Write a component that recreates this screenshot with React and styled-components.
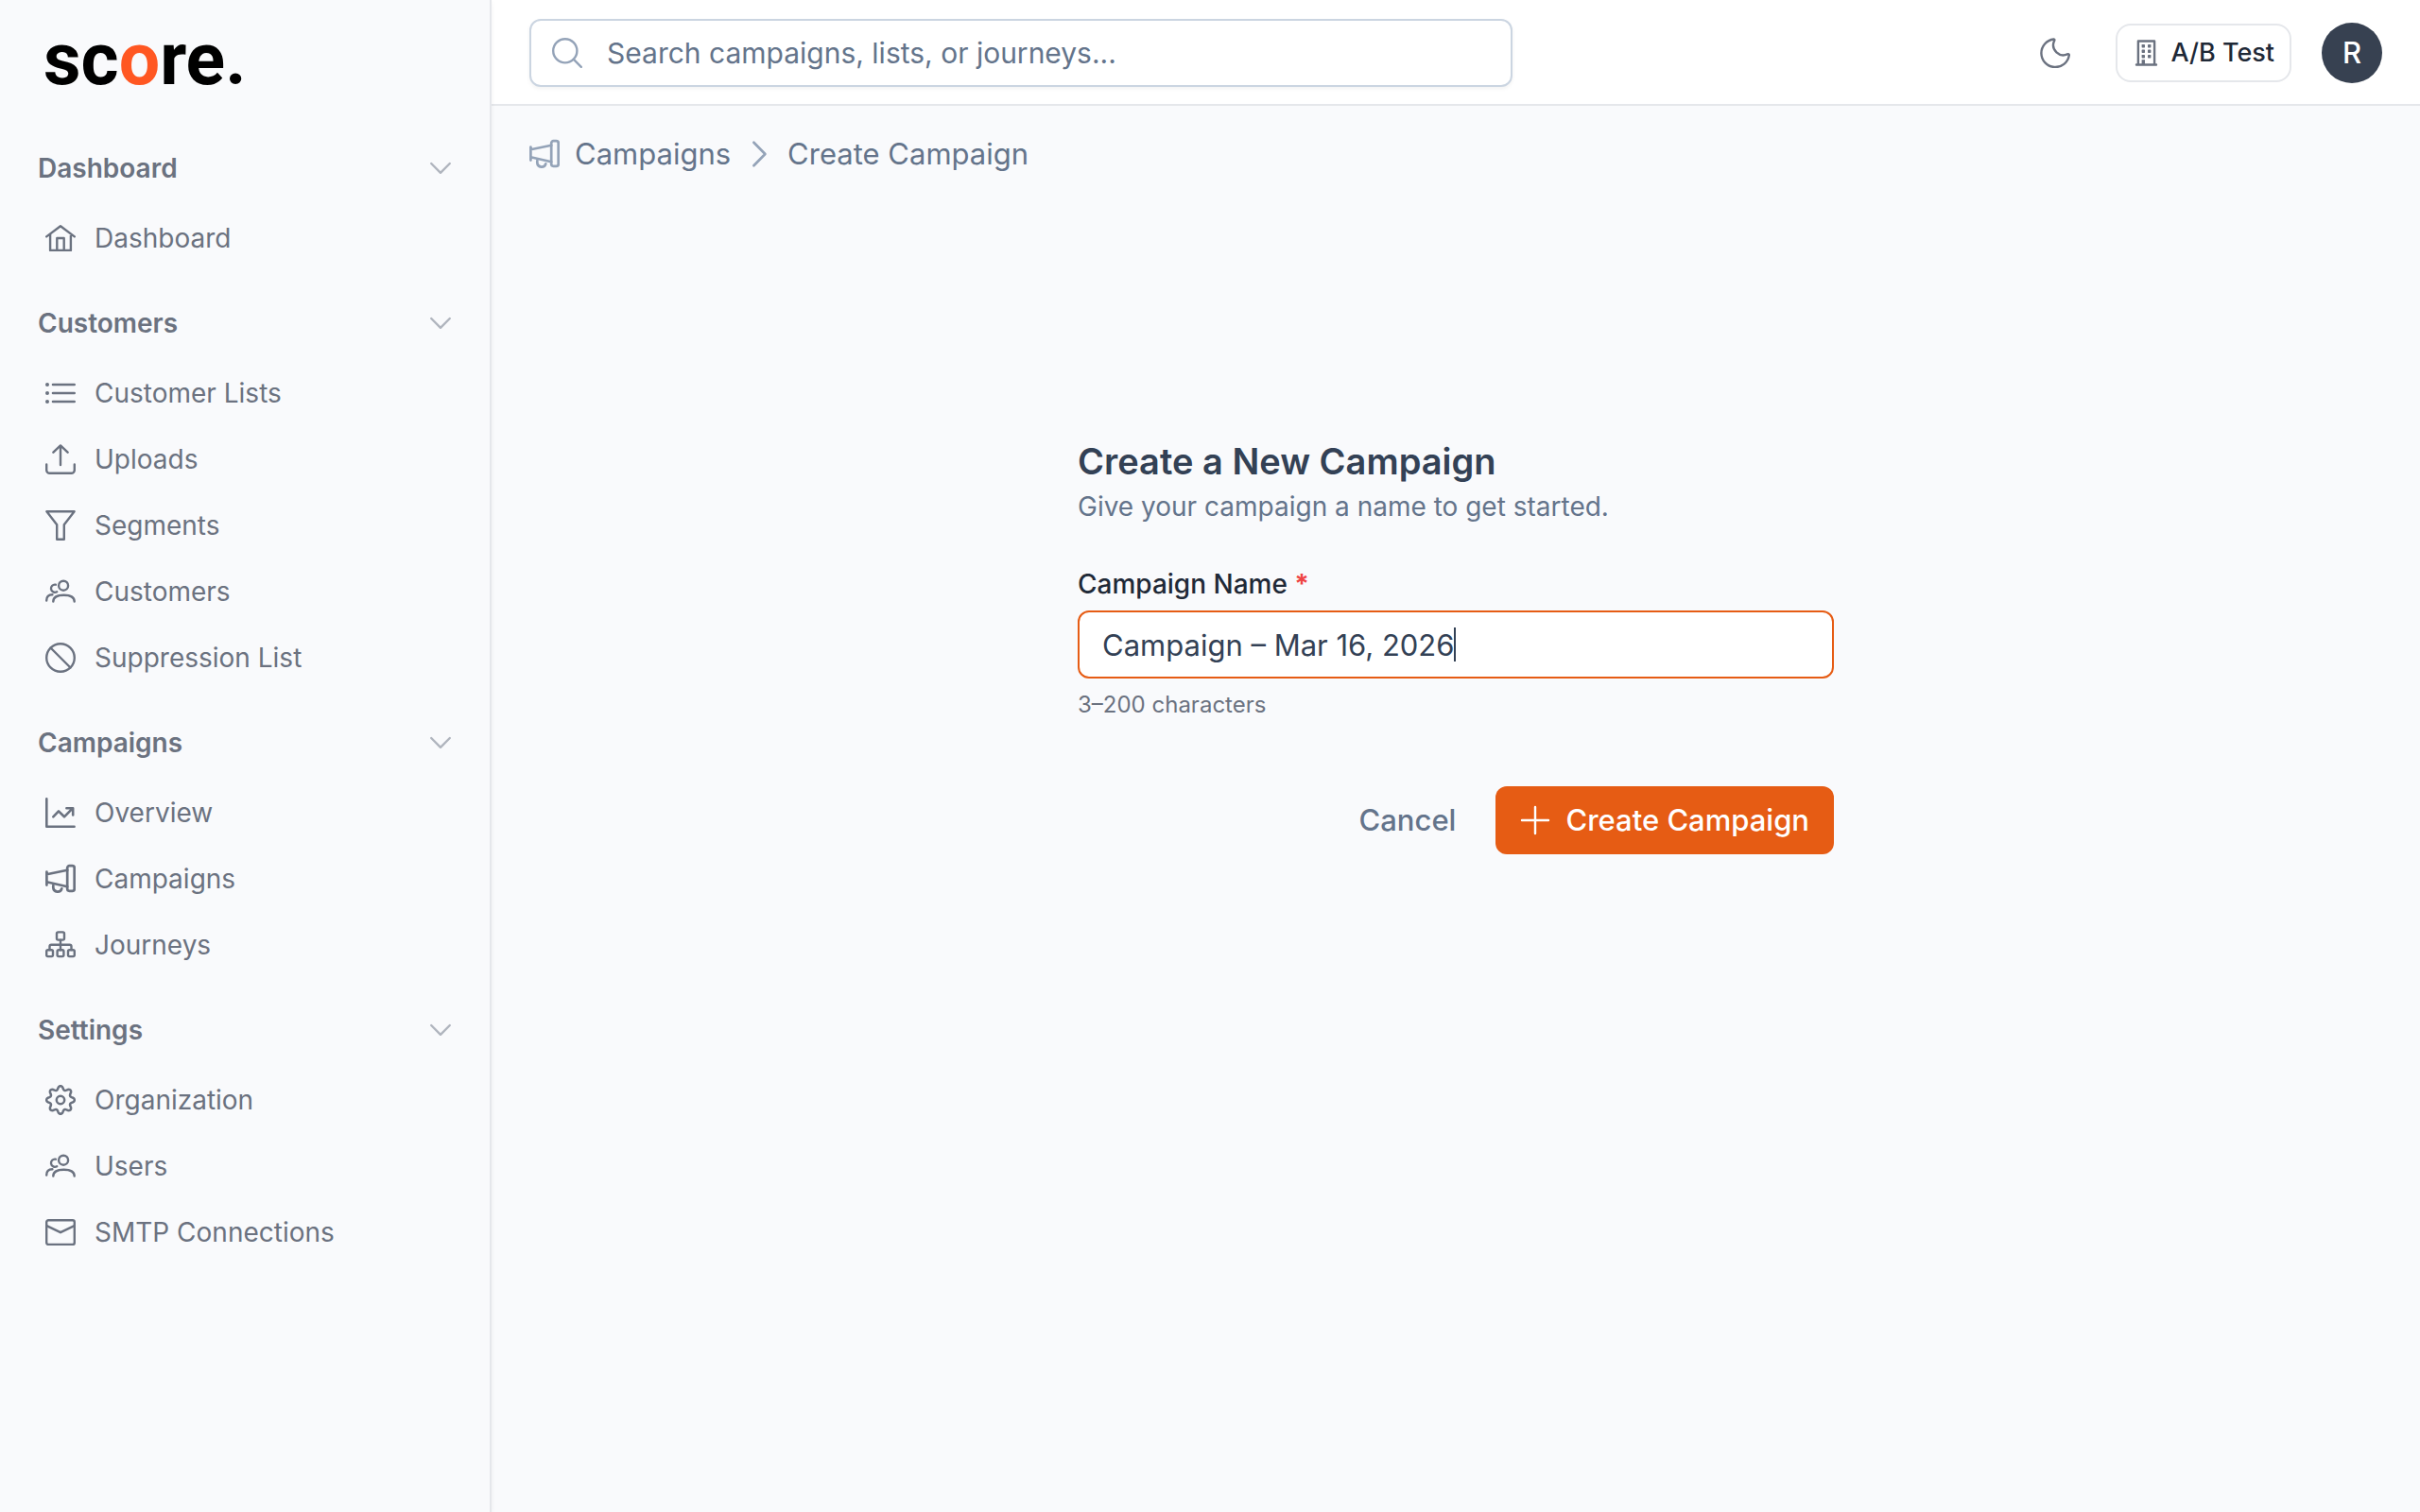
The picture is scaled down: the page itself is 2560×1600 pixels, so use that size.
import React, { useLayoutEffect, useRef, useState } from "react";
import styled, { createGlobalStyle } from "styled-components";

const color = {
  canvas: "#f9fafc",
  surface: "#ffffff",
  line: "#e5e7eb",
  inputLine: "#cbd5e1",
  nav: "#6b7280",
  chevron: "#b0b5be",
  slate: "#64748b",
  slateLight: "#94a3b8",
  heading: "#334155",
  ink: "#1f2937",
  accent: "#e65c14",
  danger: "#ef4444",
};

const FONT = 'Inter, "Liberation Sans", sans-serif';

const GlobalStyle = createGlobalStyle`
  *, *::before, *::after { box-sizing: border-box; }
  body { margin: 0; background: ${color.canvas}; font-family: ${FONT}; }
  button, input { font-family: inherit; margin: 0; }
  button { cursor: pointer; }
`;

/* ---------- icons ---------- */

const Glyph = styled.svg`
  flex: none;
  display: block;
  width: ${(p) => p.$size || 32}px;
  height: ${(p) => p.$size || 32}px;
  color: ${(p) => p.$color || "inherit"};
  fill: none;
  stroke: currentColor;
  stroke-width: ${(p) => p.$stroke || 2.4};
  stroke-linecap: round;
  stroke-linejoin: round;
`;

const Icon = ({ size = 32, stroke, tint, children }) => (
  <Glyph viewBox={`0 0 ${size} ${size}`} $size={size} $stroke={stroke} $color={tint} aria-hidden="true">
    {children}
  </Glyph>
);

const HomeIcon = () => (
  <Icon>
    <path d="M1.2 14.4 16 3.2l14.8 11.2M5.1 11.8v17.1h21.8V11.8M12.3 28.9V16h7.4v12.9" />
  </Icon>
);
const ListIcon = () => (
  <Icon stroke={2.6}>
    <path d="M8 7h22.7M8 16h22.7M8 25h22.7" />
    <g fill="currentColor" stroke="none">
      <circle cx="2" cy="7" r="2" />
      <circle cx="2" cy="16" r="2" />
      <circle cx="2" cy="25" r="2" />
    </g>
  </Icon>
);
const UploadIcon = () => (
  <Icon>
    <path d="M16 22V1.4M8.4 8.7 16 1.4l7.6 7.3M1.2 21.5v5.900a3.4 3.4 0 0 0 3.4 3.4h22.8a3.4 3.4 0 0 0 3.4-3.4v-5.900" />
  </Icon>
);
const FunnelIcon = () => (
  <Icon>
    <path d="M1.4 1.3h29.2L19.8 15.2v15.5h-7.6V15.2z" />
  </Icon>
);
const UsersIcon = () => (
  <Icon>
    <circle cx="19.1" cy="9.7" r="5" />
    <path d="M8.3 26.6c0-4.9 4.6-6.8 11.2-6.8s11.2 1.9 11.2 6.8" />
    <path d="M10.9 8.7a4.1 4.1 0 1 0 1.3 7.5M1.2 25.6c0-4.4 1.8-6.3 6.2-6.3" />
  </Icon>
);
const BanIcon = () => (
  <Icon>
    <circle cx="16" cy="16" r="14.8" />
    <path d="m5.5 5.5 21 21" />
  </Icon>
);
const TrendIcon = () => (
  <Icon stroke={2.6}>
    <path d="M1.3 1.4v29.3h29.3M8.3 20.3l5.7-5.9 6 5.9 8.3-8.4M22.4 11.2h6.8v7.2" />
  </Icon>
);
const MegaphoneIcon = ({ tint }) => (
  <Icon tint={tint} stroke={2.7}>
    <rect x="23.2" y="2.2" width="7.5" height="26.6" rx="2.2" />
    <path d="M1.4 8.6v14M1.4 11.3l21.8-4.5M1.4 19.2l21.8 5M8.3 23.2v2.2a4.6 4.6 0 0 0 9 .9" />
  </Icon>
);
const SitemapIcon = () => (
  <Icon>
    <rect x="12" y="2.4" width="8" height="8.2" rx="1.6" />
    <rect x="1.2" y="21.2" width="6.8" height="6.9" rx="1.5" />
    <rect x="12.6" y="21.2" width="6.8" height="6.9" rx="1.5" />
    <rect x="24" y="21.2" width="6.8" height="6.9" rx="1.5" />
    <path d="M16 10.6v10.6M4.5 21v-3.4a1.8 1.8 0 0 1 1.8-1.8h19.4a1.8 1.8 0 0 1 1.8 1.8V21" />
  </Icon>
);

const gearOutline = (() => {
  const points = [];
  for (let i = 0; i < 160; i += 1) {
    const angle = (i / 160) * Math.PI * 2;
    const wave = Math.cos(8 * angle);
    const radius = 12.9 + 1.9 * Math.sign(wave) * Math.abs(wave) ** 0.75;
    points.push(`${(16 + radius * Math.cos(angle)).toFixed(2)} ${(16 + radius * Math.sin(angle)).toFixed(2)}`);
  }
  return `M${points.join("L")}Z`;
})();
const GearIcon = () => (
  <Icon stroke={2.5}>
    <path d={gearOutline} />
    <circle cx="16" cy="16" r="4.2" />
  </Icon>
);
const MailIcon = () => (
  <Icon>
    <rect x="1.2" y="3.2" width="29.6" height="25.700" rx="2" />
    <path d="m1.4 9.2 14.6 7 14.6-7" />
  </Icon>
);
const SearchIcon = () => (
  <Icon tint={color.slateLight}>
    <circle cx="13.8" cy="13.8" r="12.6" />
    <path d="m22.9 22.9 7.900 7.900" />
  </Icon>
);
const ChevronDown = () => (
  <Icon size={24} tint={color.chevron}>
    <path d="m2.2 7 9.8 9.8L21.8 7" />
  </Icon>
);
const ChevronRight = () => (
  <Icon tint={color.slateLight} stroke={2.7}>
    <path d="m10.4 3.8 12 12.2-12 12.2" />
  </Icon>
);
const MoonIcon = () => (
  <Icon>
    <path d="M14.6 1.5A14.8 14.8 0 1 0 30.8 18.6c.2-1.2-.8-1.7-1.9-1.2A10.6 10.6 0 0 1 14.7 4.1c1-1.8.8-2.7-.1-2.6Z" />
  </Icon>
);
const BuildingIcon = () => (
  <Icon size={28} tint={color.nav}>
    <path d="M5.9 26.5v-25h17.2v25M4 26.5h21" />
    <g fill="currentColor" stroke="none">
      {[5, 10.5, 16].map((y) => (
        <React.Fragment key={y}>
          <rect x="9.6" y={y} width="3.4" height="3.4" rx=".6" />
          <rect x="16" y={y} width="3.4" height="3.4" rx=".6" />
        </React.Fragment>
      ))}
      <rect x="9.6" y="21.2" width="3.4" height="5.3" />
    </g>
  </Icon>
);
const PlusIcon = () => (
  <Icon>
    <path d="M16 2v28M2 16h28" />
  </Icon>
);

/* ---------- layout ---------- */

const Shell = styled.div`
  display: grid;
  grid-template-columns: 520px minmax(0, 1fr);
  min-height: 100vh;
`;

const Sidebar = styled.aside`
  position: relative;
  z-index: 1;
  padding: 25px 40px;
  border-right: 2px solid ${color.line};
  background: ${color.canvas};
  box-shadow: 0 2px 6px rgba(0, 0, 0, 0.05);
`;

const Logo = styled.a`
  display: block;
  padding-left: 6px;
  margin-bottom: 48px;
  font-family: Roboto, sans-serif;
  font-size: 77px;
  font-weight: 700;
  line-height: 76px;
  color: #000;
  text-decoration: none;
`;

const LogoAccent = styled.span`
  color: #ff5722;
`;

const Nav = styled.nav`
  display: flex;
  flex-direction: column;
  gap: 28px;
`;

const NavGroup = styled.section`
  display: flex;
  flex-direction: column;
  gap: 12px;
`;

const GroupToggle = styled.button`
  display: flex;
  align-items: center;
  justify-content: space-between;
  height: 58px;
  padding: 0;
  border: 0;
  background: none;
  color: ${color.nav};
  font-size: 28px;
  font-weight: 600;
  line-height: 40px;
`;

const NavList = styled.ul`
  display: flex;
  flex-direction: column;
  gap: 4px;
  margin: 0;
  padding: 0;
  list-style: none;
`;

const NavLink = styled.a`
  display: flex;
  align-items: center;
  gap: 20px;
  height: 66px;
  padding: 0 8px;
  color: ${color.nav};
  font-size: 28px;
  line-height: 40px;
  text-decoration: none;
`;

const Page = styled.div`
  display: flex;
  flex-direction: column;
  min-width: 0;
`;

const TopBar = styled.header`
  display: flex;
  align-items: center;
  justify-content: space-between;
  gap: 40px;
  padding: 20px 40px 18px;
  border-bottom: 2px solid ${color.line};
  background: ${color.surface};
`;

const SearchBox = styled.label`
  display: flex;
  flex: 0 1 1040px;
  align-items: center;
  gap: 26px;
  height: 72px;
  padding: 0 22px;
  border: 2px solid ${color.inputLine};
  border-radius: 12px;
  background: ${color.surface};
  box-shadow: 0 2px 4px rgba(0, 0, 0, 0.05);
`;

const SearchInput = styled.input`
  flex: 1;
  min-width: 0;
  padding: 0;
  border: 0;
  outline: 0;
  background: none;
  color: ${color.heading};
  font-size: 30px;
  line-height: 40px;

  &::placeholder {
    color: ${color.slate};
    opacity: 1;
  }
`;

const Tools = styled.div`
  display: flex;
  align-items: center;
  gap: 32px;
`;

const IconButton = styled.button`
  padding: 16px;
  border: 0;
  background: none;
  color: ${color.nav};
`;

const OrgButton = styled.button`
  display: flex;
  align-items: center;
  gap: 12px;
  height: 62px;
  padding: 0 16px;
  border: 2px solid ${color.line};
  border-radius: 16px;
  background: ${color.surface};
  color: ${color.ink};
  font-size: 27px;
  font-weight: 500;
  line-height: 40px;
`;

const Avatar = styled.button`
  width: 64px;
  height: 64px;
  padding: 0;
  border: 0;
  border-radius: 50%;
  background: #374151;
  color: #fff;
  font-size: 31px;
  font-weight: 500;
  line-height: 40px;
`;

const Content = styled.main`
  padding: 35px 40px 40px;
`;

const Breadcrumbs = styled.nav`
  display: flex;
  align-items: center;
  gap: 14px;
  color: ${color.slate};
  font-size: 31px;
  line-height: 32px;
`;

const Crumb = styled.a`
  display: flex;
  align-items: center;
  gap: 16px;
  color: inherit;
  text-decoration: none;
`;

const CampaignForm = styled.form`
  display: flex;
  flex-direction: column;
  width: 100%;
  max-width: 800px;
  margin: 285px auto 0;
`;

const Title = styled.h1`
  margin: 0 0 4px;
  color: ${color.heading};
  font-size: 38px;
  font-weight: 600;
  line-height: 48px;
`;

const Subtitle = styled.p`
  margin: 0 0 42px;
  color: ${color.slate};
  font-size: 28px;
  line-height: 40px;
`;

const FieldLabel = styled.label`
  margin-bottom: 8px;
  color: ${color.ink};
  font-size: 28px;
  font-weight: 500;
  line-height: 40px;
`;

const Required = styled.span`
  color: ${color.danger};
  font-weight: 700;
`;

const Field = styled.div`
  position: relative;
  display: flex;
`;

const NameInput = styled.input`
  width: 100%;
  height: 72px;
  padding: 0 24px;
  border: 2px solid ${color.accent};
  border-radius: 12px;
  outline: 0;
  background: ${color.surface};
  color: ${color.heading};
  caret-color: transparent;
  font-size: 31px;
  line-height: 40px;
`;

const Caret = styled.span`
  position: absolute;
  top: 18px;
  width: 2px;
  height: 36px;
  background: ${color.heading};
  pointer-events: none;
`;

const Hint = styled.p`
  margin: 12px 0 70px;
  color: ${color.nav};
  font-size: 24px;
  line-height: 32px;
`;

const Actions = styled.div`
  display: flex;
  justify-content: flex-end;
  gap: 16px;
`;

const Button = styled.button`
  display: flex;
  align-items: center;
  gap: 16px;
  height: 72px;
  padding: 0 26px;
  border: 0;
  border-radius: 12px;
  background: ${(p) => (p.$primary ? color.accent : "none")};
  color: ${(p) => (p.$primary ? "#fff" : color.slate)};
  font-size: 31px;
  font-weight: 500;
  line-height: 40px;
`;

/* ---------- content ---------- */

const groups = [
  { title: "Dashboard", items: [["Dashboard", HomeIcon]] },
  {
    title: "Customers",
    items: [
      ["Customer Lists", ListIcon],
      ["Uploads", UploadIcon],
      ["Segments", FunnelIcon],
      ["Customers", UsersIcon],
      ["Suppression List", BanIcon],
    ],
  },
  {
    title: "Campaigns",
    items: [
      ["Overview", TrendIcon],
      ["Campaigns", MegaphoneIcon],
      ["Journeys", SitemapIcon],
    ],
  },
  {
    title: "Settings",
    items: [
      ["Organization", GearIcon],
      ["Users", UsersIcon],
      ["SMTP Connections", MailIcon],
    ],
  },
];

function CampaignNameField({ id }) {
  const input = useRef(null);
  const [name, setName] = useState("Campaign – Mar 16, 2026");
  const [caretLeft, setCaretLeft] = useState(0);

  useLayoutEffect(() => {
    const style = getComputedStyle(input.current);
    const pen = document.createElement("canvas").getContext("2d");
    pen.font = `${style.fontWeight} ${style.fontSize} ${style.fontFamily}`;
    const start = parseFloat(style.paddingLeft) + parseFloat(style.borderLeftWidth);
    setCaretLeft(Math.round(start + pen.measureText(name).width));
  }, [name]);

  return (
    <Field>
      <NameInput
        id={id}
        ref={input}
        type="text"
        minLength={3}
        maxLength={200}
        required
        value={name}
        onChange={(event) => setName(event.target.value)}
      />
      <Caret style={{ left: caretLeft }} />
    </Field>
  );
}

export default function App() {
  return (
    <>
      <GlobalStyle />
      <Shell>
        <Sidebar>
          <Logo href="#home">
            sc<LogoAccent>o</LogoAccent>re.
          </Logo>
          <Nav aria-label="Main">
            {groups.map(({ title, items }) => (
              <NavGroup key={title}>
                <GroupToggle type="button" aria-expanded="true">
                  {title}
                  <ChevronDown />
                </GroupToggle>
                <NavList>
                  {items.map(([label, ItemIcon]) => (
                    <li key={label}>
                      <NavLink href="#nav">
                        <ItemIcon />
                        {label}
                      </NavLink>
                    </li>
                  ))}
                </NavList>
              </NavGroup>
            ))}
          </Nav>
        </Sidebar>

        <Page>
          <TopBar>
            <SearchBox>
              <SearchIcon />
              <SearchInput
                type="text"
                aria-label="Search"
                placeholder="Search campaigns, lists, or journeys..."
              />
            </SearchBox>
            <Tools>
              <IconButton type="button" aria-label="Toggle dark mode">
                <MoonIcon />
              </IconButton>
              <OrgButton type="button">
                <BuildingIcon />
                A/B Test
              </OrgButton>
              <Avatar type="button">R</Avatar>
            </Tools>
          </TopBar>

          <Content>
            <Breadcrumbs aria-label="Breadcrumb">
              <Crumb href="#campaigns">
                <MegaphoneIcon tint={color.slateLight} />
                Campaigns
              </Crumb>
              <ChevronRight />
              <Crumb href="#create" aria-current="page">
                Create Campaign
              </Crumb>
            </Breadcrumbs>

            <CampaignForm onSubmit={(event) => event.preventDefault()}>
              <Title>Create a New Campaign</Title>
              <Subtitle>Give your campaign a name to get started.</Subtitle>
              <FieldLabel htmlFor="campaign-name">
                Campaign Name <Required>*</Required>
              </FieldLabel>
              <CampaignNameField id="campaign-name" />
              <Hint>3–200 characters</Hint>
              <Actions>
                <Button type="button">Cancel</Button>
                <Button type="submit" $primary>
                  <PlusIcon />
                  Create Campaign
                </Button>
              </Actions>
            </CampaignForm>
          </Content>
        </Page>
      </Shell>
    </>
  );
}
